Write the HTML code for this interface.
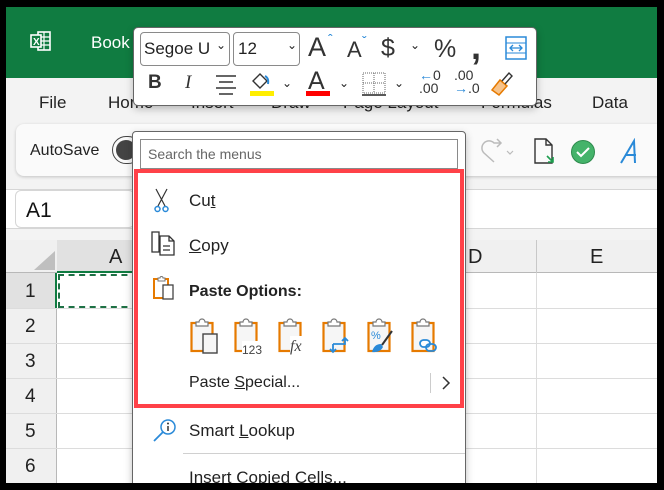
<!DOCTYPE html>
<html><head><meta charset="utf-8"><style>
*{margin:0;padding:0;box-sizing:border-box}
html,body{width:664px;height:490px;overflow:hidden}
body{background:#000;position:relative;font-family:"Liberation Sans",sans-serif;color:#222}
.a{position:absolute}
.t{position:absolute;white-space:nowrap}
</style></head><body>
<div class="a" style="left:6px;top:7px;width:651px;height:476px;background:#f3f3f3;overflow:hidden">
 <div class="a" style="left:0;top:0;width:651px;height:71px;background:#107c41"></div>
 <svg class="a" style="left:24px;top:23px" width="22" height="22" viewBox="0 0 22 22"><rect x="8" y="2" width="12" height="18" fill="none" stroke="#fff" stroke-width="1.6"/><path d="M8 7h12M8 11h12M8 15h12M14 2v18" stroke="#fff" stroke-width="1.2"/><rect x="1" y="5" width="10" height="12" fill="#107c41" stroke="#fff" stroke-width="1.6"/><text x="3" y="15" fill="#fff" font-size="10" font-weight="bold" font-family="Liberation Sans">X</text></svg>
 <div class="t" style="left:85px;top:26px;color:#fff;font-size:17px">Book</div>
 <div class="t" style="left:33px;top:86px;font-size:17px">File</div>
 <div class="t" style="left:102px;top:86px;font-size:17px">Home</div>
 <div class="t" style="left:185px;top:86px;font-size:17px">Insert</div>
 <div class="t" style="left:265px;top:86px;font-size:17px">Draw</div>
 <div class="t" style="left:337px;top:86px;font-size:17px">Page Layout</div>
 <div class="t" style="left:475px;top:86px;font-size:17px">Formulas</div>
 <div class="t" style="left:586px;top:86px;font-size:17px">Data</div>
 <div class="a" style="left:10px;top:117px;width:660px;height:52px;background:#fafafa;border-radius:8px;box-shadow:0 1px 3px rgba(0,0,0,.2)"></div>
 <div class="t" style="left:24px;top:135px;font-size:16px">AutoSave</div>
 <div class="a" style="left:106px;top:129px;width:30px;height:28px;border:1.5px solid #444;border-radius:14px"><div class="a" style="left:3px;top:3px;width:20px;height:20px;border-radius:50%;background:#444"></div></div>
 <svg class="a" style="left:470px;top:130px" width="40" height="30"><path d="M18 25 L8 16 A7 7 0 0 1 18 6 h6 M21 2 l4 4 -4 4" fill="none" stroke="#bbb" stroke-width="1.5"/><path d="M31 14 l3 3 3-3" fill="none" stroke="#bbb" stroke-width="1.2"/></svg>
 <svg class="a" style="left:527px;top:131px" width="24" height="28"><path d="M2 1h11l6 6v18H2z M13 1v6h6" fill="none" stroke="#333" stroke-width="1.4"/><path d="M14 18l6 6M20 19v5h-5" fill="none" stroke="#1e9e4f" stroke-width="1.6"/></svg>
 <svg class="a" style="left:564px;top:132px" width="26" height="26"><circle cx="13" cy="13" r="11.5" fill="#44b36a" stroke="#2e8b4d"/><path d="M7 13l4 4 8-8" fill="none" stroke="#fff" stroke-width="2"/></svg>
 <svg class="a" style="left:612px;top:131px" width="24" height="28"><path d="M3 25 L16 3 L17 25 M7 17h11" fill="none" stroke="#2a8ad8" stroke-width="2"/></svg>
 <div class="a" style="left:0;top:182px;width:651px;height:40px;background:#fff;border-top:1px solid #d6d6d6;border-bottom:1px solid #d6d6d6"></div>
 <div class="a" style="left:9px;top:183px;width:120px;height:38px;background:#fff;border:1px solid #d6d6d6;border-radius:6px"></div>
 <div class="t" style="left:20px;top:192px;font-size:21px;color:#111">A1</div>
 <div class="a" style="left:0;top:233px;width:651px;height:33px;background:#f0f0f0;border-bottom:1px solid #b8b8b8"></div>
 <div class="a" style="left:51px;top:233px;width:80px;height:33px;background:#e1e1e1;border-bottom:2px solid #107c41"></div>
 <svg class="a" style="left:22px;top:244px" width="28" height="20"><path d="M27 0 V19 H6 Z" fill="#bfbfbf"/></svg>
 <div class="t" style="left:103px;top:239px;font-size:20px">A</div>
 <div class="t" style="left:462px;top:239px;font-size:20px">D</div>
 <div class="t" style="left:584px;top:239px;font-size:20px">E</div>
 <div class="a" style="left:530px;top:233px;width:1px;height:33px;background:#c8c8c8"></div>
 <div class="a" style="left:0;top:266px;width:51px;height:230px;background:#f0f0f0;border-right:1px solid #b8b8b8"></div>
 <div class="a" style="left:0;top:266px;width:51px;height:35px;background:#e1e1e1;border-right:2px solid #107c41"></div>
 <div class="a" style="left:51px;top:266px;width:600px;height:230px;background:#fff"></div>
 <div class="a" style="left:0;top:301px;width:651px;height:1px;background:#dcdcdc"></div>
 <div class="a" style="left:0;top:336px;width:651px;height:1px;background:#dcdcdc"></div>
 <div class="a" style="left:0;top:371px;width:651px;height:1px;background:#dcdcdc"></div>
 <div class="a" style="left:0;top:406px;width:651px;height:1px;background:#dcdcdc"></div>
 <div class="a" style="left:0;top:441px;width:651px;height:1px;background:#dcdcdc"></div>
 <div class="a" style="left:530px;top:266px;width:1px;height:230px;background:#dcdcdc"></div>
 <div class="a" style="left:52px;top:267px;width:80px;height:34px;border:2px dashed #1e7145"></div>
 <div class="t" style="left:19px;top:274px;font-size:19px">1</div>
 <div class="t" style="left:19px;top:309px;font-size:19px">2</div>
 <div class="t" style="left:19px;top:344px;font-size:19px">3</div>
 <div class="t" style="left:19px;top:379px;font-size:19px">4</div>
 <div class="t" style="left:19px;top:414px;font-size:19px">5</div>
 <div class="t" style="left:19px;top:449px;font-size:19px">6</div>

 <!-- context menu (inside frame, clipped) -->
 <div class="a" style="left:126px;top:124px;width:334px;height:370px;background:#fff;border:1.5px solid #666;border-radius:4px;box-shadow:0 3px 8px rgba(0,0,0,.25)"></div>
</div>

<!-- mini toolbar -->
<div class="a" style="left:133px;top:27px;width:404px;height:79px;background:#fff;border:1.5px solid #666;border-radius:5px;box-shadow:0 3px 8px rgba(0,0,0,.25)"></div>
<div class="a" style="left:140px;top:32px;width:90px;height:34px;border:1px solid #8a8a8a;border-radius:4px"></div>
<div class="t" style="left:144px;top:39px;font-size:17px">Segoe U</div>
<div class="t" style="left:216px;top:38px;font-size:12px">&#8964;</div>
<div class="a" style="left:233px;top:32px;width:67px;height:34px;border:1px solid #8a8a8a;border-radius:4px"></div>
<div class="t" style="left:238px;top:39px;font-size:17px">12</div>
<div class="t" style="left:287px;top:38px;font-size:12px">&#8964;</div>
<div class="t" style="left:308px;top:32px;font-size:27px;color:#333">A</div><div class="t" style="left:328px;top:31px;font-size:14px;color:#2a8ad8">&#710;</div>
<div class="t" style="left:347px;top:37px;font-size:22px;color:#333">A</div><div class="t" style="left:362px;top:33px;font-size:14px;color:#2a8ad8">&#711;</div>
<div class="t" style="left:381px;top:34px;font-size:25px;color:#333">$</div>
<div class="t" style="left:410px;top:38px;font-size:12px">&#8964;</div>
<div class="t" style="left:434px;top:35px;font-size:25px;color:#333">%</div>
<div class="t" style="left:471px;top:26px;font-size:36px;font-weight:bold;color:#333">,</div>
<svg class="a" style="left:505px;top:36px" width="22" height="24"><rect x="1" y="1" width="20" height="22" fill="none" stroke="#2a8ad8" stroke-width="1.5"/><path d="M1 7h20M1 17h20" stroke="#2a8ad8"/><path d="M5 12h12M8 9l-3 3 3 3M14 9l3 3-3 3" fill="none" stroke="#2a8ad8" stroke-width="1.3"/></svg>
<div class="t" style="left:148px;top:72px;font-size:19px;font-weight:bold;color:#333">B</div>
<div class="t" style="left:185px;top:72px;font-size:19px;font-style:italic;font-family:'Liberation Serif',serif;color:#333">I</div>
<svg class="a" style="left:215px;top:73px" width="22" height="22"><path d="M1 3h20M4 9h14M1 15h20M4 21h14" stroke="#333" stroke-width="1.5"/></svg>
<svg class="a" style="left:250px;top:70px" width="22" height="22"><path d="M3 11 l7-7 7 7 -7 7z" fill="none" stroke="#333" stroke-width="1.4"/><path d="M15 6 q4 2 3 8" fill="none" stroke="#2a8ad8" stroke-width="2"/></svg>
<div class="a" style="left:250px;top:91px;width:24px;height:5px;background:#ffee00"></div>
<div class="t" style="left:282px;top:76px;font-size:12px">&#8964;</div>
<div class="t" style="left:308px;top:67px;font-size:25px;color:#333">A</div>
<div class="a" style="left:306px;top:91px;width:24px;height:5px;background:#ff0000"></div>
<div class="t" style="left:339px;top:76px;font-size:12px">&#8964;</div>
<svg class="a" style="left:362px;top:72px" width="24" height="24"><rect x="1" y="1" width="22" height="20" fill="none" stroke="#666" stroke-dasharray="1 1"/><path d="M12 1v20M1 11h22" stroke="#666" stroke-dasharray="1 1"/><path d="M0 23h24" stroke="#222" stroke-width="1.5"/></svg>
<div class="t" style="left:394px;top:76px;font-size:12px">&#8964;</div>
<div class="t" style="left:419px;top:69px;font-size:14px;color:#2a8ad8;line-height:13px">&#8592;<span style="color:#333">0</span><br><span style="color:#333">.00</span></div>
<div class="t" style="left:454px;top:69px;font-size:14px;color:#333;line-height:13px">.00<br><span style="color:#2a8ad8">&#8594;</span>.0</div>
<svg class="a" style="left:490px;top:70px" width="24" height="26"><path d="M2 20 l8-10 7 6 -8 9z" fill="#f7c38a" stroke="#e67a00" stroke-width="1.5"/><path d="M12 11 l7-8 3 3-7 8" fill="none" stroke="#333" stroke-width="1.4"/></svg>

<!-- context menu content -->
<div class="a" style="left:140px;top:139px;width:318px;height:30px;border:1px solid #8a8a8a"></div>
<div class="t" style="left:148px;top:146px;font-size:14px;color:#666">Search the menus</div>
<div class="a" style="left:134px;top:169px;width:330px;height:239px;border:4px solid #ff4148"></div>
<svg class="a" style="left:153px;top:188px" width="18" height="26"><path d="M3 1 L12 18 M14 1 L5 18" stroke="#333" stroke-width="1.2"/><circle cx="4.5" cy="21" r="2.5" fill="none" stroke="#2a8ad8" stroke-width="1.5"/><circle cx="12.5" cy="21" r="2.5" fill="none" stroke="#2a8ad8" stroke-width="1.5"/></svg>
<div class="t" style="left:189px;top:191px;font-size:17px">Cu<u>t</u></div>
<svg class="a" style="left:151px;top:231px" width="26" height="26"><path d="M1 1h7v20H1z" fill="none" stroke="#333" stroke-width="1.3"/><path d="M9 5h9l5 5v14H9z M18 5v5h5 M12 15h7M12 19h7" fill="#fff" stroke="#333" stroke-width="1.3"/></svg>
<div class="t" style="left:189px;top:236px;font-size:17px"><u>C</u>opy</div>
<svg class="a" style="left:153px;top:274px" width="24" height="26"><rect x="1" y="5" width="14" height="19" fill="#fff" stroke="#e67a00" stroke-width="2"/><path d="M5 7v-3h2a1.5 1.5 0 0 1 3 0h2v3z" fill="#fff" stroke="#777"/><rect x="10" y="11" width="10" height="14" fill="#fff" stroke="#444" stroke-width="1.3"/></svg>
<div class="t" style="left:189px;top:283px;font-size:16px;font-weight:bold">Paste Options:</div>
<svg class="a" style="left:190px;top:317px" width="260" height="38">
 <g><rect x="1.5" y="6" width="21" height="28" fill="#f6f6f6" stroke="#e67a00" stroke-width="2.2"/><path d="M6 9v-4h3a3 3 0 0 1 6 0h3v4z" fill="#fff" stroke="#777" stroke-width="1.2"/></g>
 <rect x="13" y="17" width="14" height="19" fill="#f6f6f6" stroke="#444" stroke-width="1.4"/>
 <g transform="translate(44,0)"><rect x="1.5" y="6" width="21" height="28" fill="#f6f6f6" stroke="#e67a00" stroke-width="2.2"/><path d="M6 9v-4h3a3 3 0 0 1 6 0h3v4z" fill="#fff" stroke="#777" stroke-width="1.2"/><rect x="8" y="24" width="20" height="14" fill="#fff"/><text x="8" y="37" font-size="12" fill="#444" font-family="Liberation Sans">123</text></g>
 <g transform="translate(88,0)"><rect x="1.5" y="6" width="21" height="28" fill="#f6f6f6" stroke="#e67a00" stroke-width="2.2"/><path d="M6 9v-4h3a3 3 0 0 1 6 0h3v4z" fill="#fff" stroke="#777" stroke-width="1.2"/><rect x="12" y="19" width="16" height="18" fill="#fff"/><text x="12" y="34" font-size="16" font-style="italic" fill="#444" font-family="Liberation Serif">fx</text></g>
 <g transform="translate(132,0)"><rect x="1.5" y="6" width="21" height="28" fill="#f6f6f6" stroke="#e67a00" stroke-width="2.2"/><path d="M6 9v-4h3a3 3 0 0 1 6 0h3v4z" fill="#fff" stroke="#777" stroke-width="1.2"/><path d="M11 27v8M8 32l3 3 3-3M11 27h12v-6M20 24l3-3 3 3" fill="none" stroke="#2a8ad8" stroke-width="1.8"/></g>
 <g transform="translate(177,0)"><rect x="1.5" y="6" width="21" height="28" fill="#f6f6f6" stroke="#e67a00" stroke-width="2.2"/><path d="M6 9v-4h3a3 3 0 0 1 6 0h3v4z" fill="#fff" stroke="#777" stroke-width="1.2"/><text x="4" y="22" font-size="11" fill="#2a8ad8" font-family="Liberation Sans">%</text><path d="M5 35 q2-8 9-8 l2 3 q-3 6-11 5z" fill="#2a8ad8"/><path d="M15 28 l10-14" stroke="#333" stroke-width="2"/></g>
 <g transform="translate(221,0)"><rect x="1.5" y="6" width="21" height="28" fill="#f6f6f6" stroke="#e67a00" stroke-width="2.2"/><path d="M6 9v-4h3a3 3 0 0 1 6 0h3v4z" fill="#fff" stroke="#777" stroke-width="1.2"/><rect x="9" y="23" width="10" height="7" rx="3.5" fill="#fff" stroke="#2a8ad8" stroke-width="1.8"/><rect x="15" y="27" width="10" height="7" rx="3.5" fill="none" stroke="#2a8ad8" stroke-width="1.8"/></g>
</svg>
<div class="t" style="left:189px;top:374px;font-size:16px">Paste <u>S</u>pecial...</div>
<div class="a" style="left:430px;top:373px;width:1px;height:20px;background:#ccc"></div>
<svg class="a" style="left:441px;top:375px" width="10" height="16"><path d="M2 2l6 6-6 6" fill="none" stroke="#333" stroke-width="1.5"/></svg>
<svg class="a" style="left:152px;top:418px" width="26" height="26"><circle cx="16" cy="9" r="7" fill="none" stroke="#2a8ad8" stroke-width="1.5"/><path d="M11 14L2 23" stroke="#2a8ad8" stroke-width="1.8"/><path d="M16 8v5" stroke="#333" stroke-width="1.5"/><circle cx="16" cy="5.5" r="1" fill="#333"/></svg>
<div class="t" style="left:189px;top:421px;font-size:17px">Smart <u>L</u>ookup</div>
<div class="a" style="left:183px;top:453px;width:282px;height:1px;background:#d0d0d0"></div>
<div class="t" style="left:189px;top:468px;font-size:17px">Insert Copied Cells...</div>
<div class="a" style="left:0;top:483px;width:664px;height:7px;background:#000"></div>
<div class="a" style="left:657px;top:0;width:7px;height:490px;background:#000"></div>
</body></html>
